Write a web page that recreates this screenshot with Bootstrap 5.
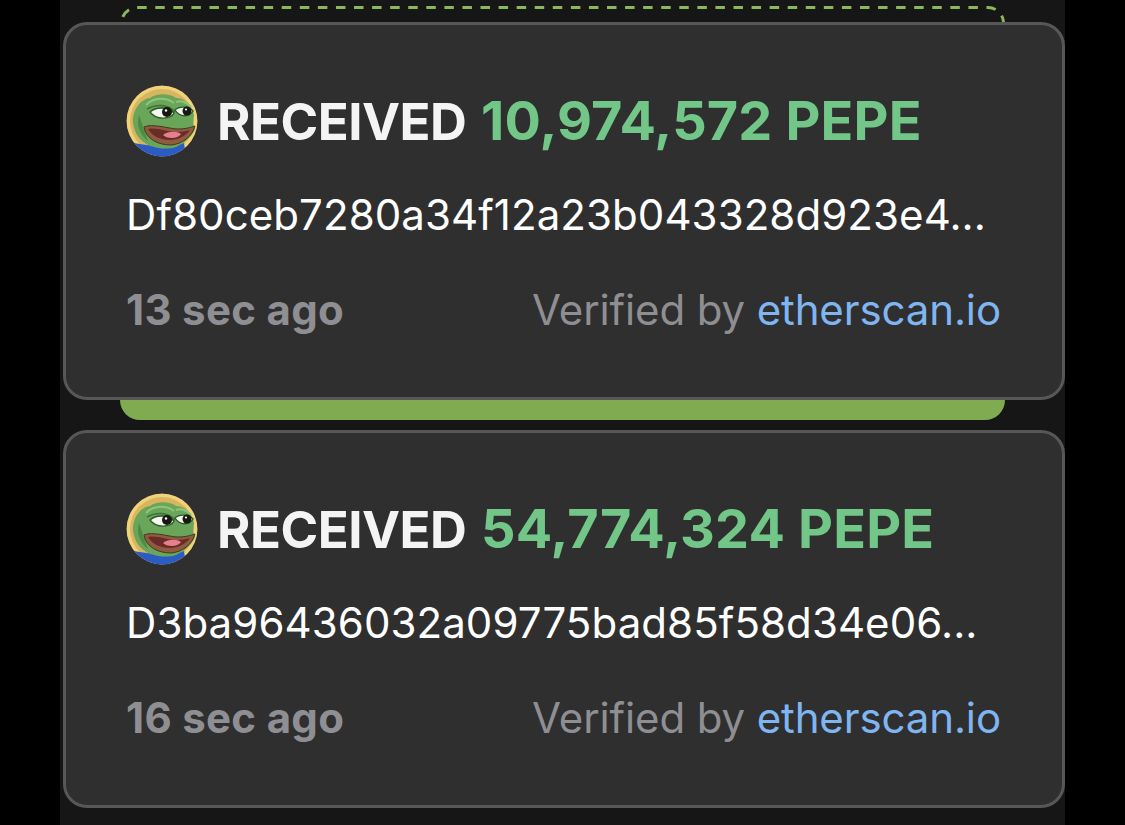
<!DOCTYPE html>
<html lang="en"><head><meta charset="utf-8"><title>Transactions</title>
<link href="https://cdn.jsdelivr.net/npm/bootstrap@5.3.0/dist/css/bootstrap.min.css" rel="stylesheet">
<style>
html,body{height:825px;overflow:hidden;background:#000}
body{font-family:Inter,"Liberation Sans",sans-serif}
.shell{width:1005px;height:825px;margin-left:60px;background:#161616;padding-top:6px;overflow:hidden}
.dash-top{height:16px;width:885px;margin-left:60px}
.dash-top svg{display:block}
.bar-bottom{height:20px;width:885px;margin-left:60px;background:#80ab50;border-radius:0 0 20px 20px}
.tx-card{width:1002px;height:378px;margin-left:3px;background:#2f2f2f;border:3px solid #575757;border-radius:24px;padding:58px 61px 0 60px}
.spacer{height:10px}
.tx-title{height:76px;font-size:51px;font-weight:700;letter-spacing:-.5px;color:#f4f4f4;line-height:76px;gap:19px}
.tx-amt{color:#72c688;font-size:54px;letter-spacing:.15px;margin-left:3px}
.tx-hash{font-size:42px;line-height:48px;color:#fff;margin-top:32px;letter-spacing:.08px}
.tx-foot{margin-top:47px;font-size:42px;line-height:48px}
.tx-time{font-weight:700;color:#8e8e93;letter-spacing:.3px}
.tx-ver{color:#8e8e93;letter-spacing:-.12px}
.tx-ver a{color:#7fb5f0;text-decoration:none}
.coin{width:72px;height:72px;flex:none}
</style></head><body>
<svg width="0" height="0" class="position-absolute"><defs>
<symbol id="pepe" viewBox="0 0 72 72">
<clipPath id="cc"><circle cx="36" cy="36" r="35.5"/></clipPath>
<g clip-path="url(#cc)">
<circle cx="36" cy="36" r="36" fill="#f0d27a"/>
<circle cx="36" cy="36" r="32" fill="#d9b560"/>
<path d="M8 58C18 60 44 64 58 58L60 72H10Z" fill="#2a5cc4"/>
<path d="M7 38C6 26 14 14 24 13C30 8 44 8 50 13C58 13 66 19 68 30L67 38L69 44C66 52 58 58 50 62C38 66 22 62 15 55C10 50 8 44 7 38Z" fill="#6aa659"/>
<path d="M13 30C10 40 14 50 22 56C18 46 16 38 13 30Z" fill="#508a44"/>
<path d="M20 20C28 12 40 12 48 18M50 17C56 15 62 18 65 22" fill="none" stroke="#8fc47c" stroke-width="2"/>
<path d="M21 24C30 19 42 19 49 27" fill="none" stroke="#3e7236" stroke-width="1.6"/>
<path d="M24 27C29 22 42 21 48 28C45 34 31 36 24 27Z" fill="#f6f6f0" stroke="#2f5a2b" stroke-width="1.4"/>
<path d="M49 25C53 21 63 21 67 26C64 32 54 33 49 25Z" fill="#f6f6f0" stroke="#2f5a2b" stroke-width="1.4"/>
<circle cx="41" cy="27" r="5" fill="#15190f"/><circle cx="61" cy="26" r="4.5" fill="#15190f"/>
<circle cx="40" cy="25.5" r="1.2" fill="#fff"/><circle cx="60" cy="24.5" r="1.1" fill="#fff"/>
<path d="M18 42C26 38 44 44 52 44C60 44 66 42 69 41C66 52 56 59 45 60C32 60 20 54 18 42Z" fill="#8f5c40" stroke="#3f3a20" stroke-width="1"/>
<path d="M22 44C30 42 42 47 50 47C56 47 60 46 64 45C60 51 52 55 44 55C34 55 26 51 22 44Z" fill="#6b2c28"/>
<path d="M37 50C42 46 51 46 55 49C52 54 41 54 37 50Z" fill="#e6808f"/>
</g></symbol></defs></svg>
<main class="shell">
<div class="dash-top"><svg width="885" height="16" viewBox="0 0 885 16"><path d="M1.5 17A15.5 15.5 0 0 1 17 1.5H868A15.5 15.5 0 0 1 883.5 17" fill="none" stroke="#8ab85a" stroke-width="3" stroke-dasharray="9.5 8.57" stroke-dashoffset="-6.3"/></svg></div>
<section class="tx-card">
<div class="tx-title d-flex align-items-center"><svg class="coin"><use href="#pepe"/></svg><div>RECEIVED <span class="tx-amt">10,974,572 PEPE</span></div></div>
<div class="tx-hash">Df80ceb7280a34f12a23b043328d923e4...</div>
<div class="tx-foot d-flex justify-content-between"><span class="tx-time">13 sec ago</span><span class="tx-ver">Verified by <a href="#">etherscan.io</a></span></div>
</section>
<div class="bar-bottom"></div>
<div class="spacer"></div>
<section class="tx-card">
<div class="tx-title d-flex align-items-center"><svg class="coin"><use href="#pepe"/></svg><div>RECEIVED <span class="tx-amt">54,774,324 PEPE</span></div></div>
<div class="tx-hash">D3ba96436032a09775bad85f58d34e06...</div>
<div class="tx-foot d-flex justify-content-between"><span class="tx-time">16 sec ago</span><span class="tx-ver">Verified by <a href="#">etherscan.io</a></span></div>
</section>
</main>
<script src="https://cdn.jsdelivr.net/npm/bootstrap@5.3.0/dist/js/bootstrap.bundle.min.js"></script>
</body></html>
